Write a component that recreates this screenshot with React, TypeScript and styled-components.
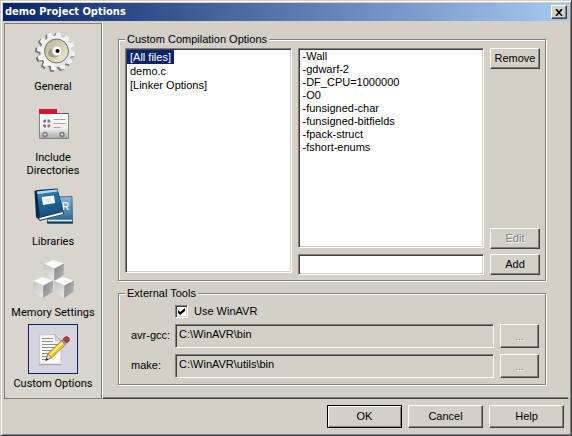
import React, { useState } from "react";
import styled, { createGlobalStyle, css } from "styled-components";

const face = "#d4d0c8";
const shade = "#808080";
const dark = "#404040";
const navy = "#0a246a";

const GlobalStyle = createGlobalStyle`
  * { box-sizing: border-box; }
  body { margin: 0; background: ${face}; }
  button, input { font: inherit; color: inherit; }
`;

const sunken = css`
  border: 1px solid;
  border-color: ${shade} #fff #fff ${shade};
  box-shadow: inset 1px 1px 0 ${dark}, inset -1px -1px 0 ${face};
`;

const raised = css`
  border: 1px solid;
  border-color: #fff ${dark} ${dark} #fff;
  box-shadow: inset -1px -1px 0 ${shade};
`;

const Dialog = styled.div`
  display: flex;
  flex-direction: column;
  min-height: 100vh;
  border: 1px solid;
  border-color: ${face} ${dark} ${dark} ${face};
  box-shadow: inset 1px 1px 0 #fff, inset -1px -1px 0 ${shade};
  padding: 2px;
  background: ${face};
  color: #000;
  font: 11px/13px "Liberation Sans", Arial, sans-serif;
`;

const TitleBar = styled.header`
  display: flex;
  align-items: center;
  justify-content: space-between;
  height: 18px;
  padding: 0 2px;
  background: linear-gradient(to right, ${navy}, #a6caf0);
`;

const Title = styled.h1`
  margin: 0;
  color: #fff;
  font: bold 11px/16px "DejaVu Sans Condensed", Tahoma, sans-serif;
`;

const CloseButton = styled.button`
  ${raised}
  display: grid;
  place-items: center;
  width: 16px;
  height: 14px;
  padding: 0;
  background: ${face};
`;

const Body = styled.div`
  display: flex;
  flex: 1;
  padding: 1px 0 0 1px;
`;

const Sidebar = styled.nav`
  display: flex;
  flex-direction: column;
  gap: 5px;
  width: 98px;
  margin-top: 1px;
  padding-top: 3px;
  border: 1px solid ${shade};
  background: #d8d4ce;
`;

const PageButton = styled.button`
  display: flex;
  flex-direction: column;
  align-items: center;
  gap: 3px;
  padding: 0;
  border: 0;
  background: none;
  text-align: center;
  font: 11px/13px Roboto, Tahoma, sans-serif;
`;

const IconFrame = styled.span<{ $selected: boolean }>`
  display: block;
  width: 50px;
  height: 50px;
  border: 1px solid ${(p) => (p.$selected ? navy : "transparent")};
  background: ${(p) => (p.$selected ? "#d4d5df" : "none")};

  svg {
    display: block;
    width: 48px;
    height: 48px;
  }
`;

const PageLabel = styled.span`
  white-space: pre-line;
`;

const Panel = styled.main`
  display: flex;
  flex: 1;
  flex-direction: column;
  gap: 6px;
  min-width: 0;
  padding: 10px 22px 13px 15px;
  border: 1px solid;
  border-color: ${face} ${face} ${dark} #fff;
  box-shadow: inset 0 -1px 0 ${shade};
`;

const Group = styled.fieldset<{ $grow?: boolean }>`
  display: flex;
  flex-direction: column;
  flex: ${(p) => (p.$grow ? "1" : "none")};
  min-width: 0;
  margin: 0;
  padding: 2px 5px 5px 6px;
  border: 1px solid ${shade};
  box-shadow: 1px 1px 0 #fff, inset 1px 1px 0 #fff;
`;

const Legend = styled.legend`
  padding: 0 2px;
  background: ${face};
`;

const Options = styled.div`
  display: grid;
  flex: 1;
  grid-template-columns: 167fr 187fr 50px;
  gap: 6px;
`;

const Column = styled.div<{ $gap: number }>`
  display: flex;
  flex-direction: column;
  gap: ${(p) => p.$gap}px;
  min-width: 0;
`;

const ListBox = styled.ul<{ $line: number }>`
  ${sunken}
  flex: 1;
  margin: 0;
  padding: 1px;
  background: #fff;
  line-height: ${(p) => p.$line}px;
  list-style: none;
`;

const FileList = styled(ListBox)`
  margin-bottom: 2px;
`;

const ListItem = styled.li<{ $selected?: boolean }>`
  width: fit-content;
  padding: 0 3px;
  background: ${(p) => (p.$selected ? navy : "transparent")};
  color: ${(p) => (p.$selected ? "#fff" : "#000")};
  cursor: default;
`;

const TextBox = styled.input`
  ${sunken}
  width: 100%;
  min-width: 0;
  height: 21px;
  padding: 0 3px;
  border-radius: 0;
  outline: none;
  background: #fff;

  &:read-only {
    height: 24px;
    padding-bottom: 4px;
    background: ${face};
  }
`;

const Button = styled.button`
  ${raised}
  height: 21px;
  padding: 0;
  background: ${face};

  &:disabled {
    color: ${shade};
    text-shadow: 1px 1px 0 #fff;
  }
`;

const Spacer = styled.div`
  flex: 1;
`;

const Tools = styled.div`
  display: grid;
  grid-template-columns: 38px 1fr 39px;
  align-items: center;
  gap: 6px;
  padding: 3px 1px 1px 6px;
`;

const ToolLabel = styled.label`
  padding-bottom: 2px;
  white-space: nowrap;
`;

const BrowseButton = styled(Button)`
  height: 24px;
`;

const CheckRow = styled.label`
  display: flex;
  grid-column: 2 / -1;
  align-items: center;
  gap: 6px;
  height: 13px;
`;

const CheckBox = styled.input`
  ${sunken}
  appearance: none;
  display: grid;
  place-items: center;
  width: 13px;
  height: 13px;
  margin: 0;
  background: #fff;

  &:checked::before {
    content: "";
    width: 7px;
    height: 7px;
    background: #000;
    clip-path: polygon(0 29%, 29% 57%, 100% 0, 100% 43%, 29% 100%, 0 71%);
  }
`;

const Footer = styled.footer`
  display: flex;
  justify-content: flex-end;
  gap: 6px;
  padding: 6px 5px 5px;
`;

const FooterButton = styled(Button)<{ $primary?: boolean }>`
  width: 75px;
  height: 23px;
  ${(p) =>
    p.$primary &&
    css`
      border-color: #000;
      box-shadow: inset 1px 1px 0 #fff, inset -1px -1px 0 ${shade};
    `}
`;

const teeth = Array.from({ length: 12 }, (_, i) => (i * 360) / 12 + 8);

const GearIcon = () => (
  <svg viewBox="1 1 48 48" aria-hidden="true">
    <defs>
      <linearGradient id="gearRim" x1="0" y1="0" x2="1" y2="1">
        <stop offset="0" stopColor="#e2e2e2" />
        <stop offset="0.5" stopColor="#ffffff" />
        <stop offset="1" stopColor="#d4d4da" />
      </linearGradient>
      <linearGradient id="gearFace" x1="0" y1="0" x2="1" y2="1">
        <stop offset="0" stopColor="#bab69c" />
        <stop offset="0.5" stopColor="#d2cdb2" />
        <stop offset="1" stopColor="#f4f0dc" />
      </linearGradient>
    </defs>
    <g fill="#77777b">
      {teeth.map((a) => (
        <path key={a} d="M23 11l1.500-5h4l1.500 5z" transform={`rotate(${a} 26.500 25.500)`} />
      ))}
      <circle cx="26.500" cy="25.500" r="15.500" />
    </g>
    <g fill="#f4f4f6">
      {teeth.map((a) => (
        <path key={a} d="M24.500 11l1.500-5.500h4l1.500 5.500z" transform={`rotate(${a} 28 24.500)`} />
      ))}
      <circle cx="28" cy="24.500" r="15.500" fill="url(#gearRim)" />
    </g>
    <circle cx="28.500" cy="24" r="12" fill="url(#gearFace)" stroke="#77745f" />
    <ellipse cx="26" cy="26" rx="6" ry="4.500" fill="#a39f86" />
    <circle cx="29" cy="24" r="4.800" fill="#fff" stroke="#c5c5bd" strokeWidth="0.600" />
    <circle cx="29.500" cy="24" r="2" fill="#050510" />
  </svg>
);

const IncludeIcon = () => (
  <svg viewBox="1 1 48 48" aria-hidden="true">
    <defs>
      <linearGradient id="card" x1="0" y1="0" x2="0" y2="1">
        <stop offset="0" stopColor="#ffffff" />
        <stop offset="0.600" stopColor="#efefef" />
        <stop offset="1" stopColor="#a8a8a8" />
      </linearGradient>
    </defs>
    <path d="M11.500 15.500h29v25h-29z" fill="url(#card)" stroke="#858589" />
    <path d="M11 11h18v5h-18z" fill="#d51430" />
    <path d="M29 15.500h11.500" stroke="#55555a" />
    <path
      d="M15 24.500v-1.500l1.500-1.500h1.500v3zM19.500 24.500v-3h1.500l1.500 1.500v1.500zM15 26.500h3v3h-1.500l-1.500-1.500zM19.500 26.500h3v1.500l-1.500 1.500h-1.500z"
      fill="#77777b"
    />
    <path d="M25.500 21.500h12M25.500 25.500h12" stroke="#a5a5aa" />
    <path d="M25.500 29.500h7" stroke="#a5a5aa" />
    <g fill="#dedede" stroke="#77777a" strokeWidth="1.300">
      <circle cx="17" cy="36.500" r="2" />
      <circle cx="34" cy="36.500" r="2" />
    </g>
    <path d="M17 37v3M34 37v3" stroke="#88888c" />
  </svg>
);

const LibrariesIcon = () => (
  <svg viewBox="1 1 48 48" aria-hidden="true">
    <defs>
      <linearGradient id="cover" x1="0" y1="0" x2="0.300" y2="1">
        <stop offset="0" stopColor="#4f95c0" />
        <stop offset="0.400" stopColor="#246c9d" />
        <stop offset="1" stopColor="#17517e" />
      </linearGradient>
      <linearGradient id="back" x1="0" y1="0" x2="0" y2="1">
        <stop offset="0" stopColor="#8bb9d4" />
        <stop offset="1" stopColor="#1c608f" />
      </linearGradient>
    </defs>
    <path d="M28 15l16-.5.5 26.500h-25v-3z" fill="url(#back)" stroke="#174b70" strokeWidth="0.700" />
    <path d="M20 38.500h24" stroke="#e8f0f5" strokeWidth="1.500" />
    <path d="M19 41h26" stroke="#092a45" />
    <text x="34" y="28" fill="#e8f1f6" fontFamily="Liberation Sans, sans-serif" fontSize="10" fontWeight="bold">R</text>
    <path d="M6.500 9l3-1 20-1.500 6.500 25.500-24 7-4-4z" fill="#082942" />
    <path d="M9 9.500l20-2 6.500 22-23.500 5.500z" fill="url(#cover)" />
    <path d="M11.500 37l23.500-6" stroke="#edf5f9" strokeWidth="2" />
    <path d="M9 9.500l20-2 .7 2-20 2.500z" fill="#b5d9ec" />
    <path d="M13.500 15l12.500-1.500 1.200 7.500-12.200 2z" fill="#f3f7fa" />
    <path d="M17.500 17.500l5-.8M17.500 19.500l6-.8" stroke="#c0ced8" strokeWidth="0.700" />
  </svg>
);

const Cube = ({ x, y }: { x: number; y: number }) => (
  <g transform={`translate(${x} ${y})`}>
    <path d="M0 4l9-4 11 3.500-9.500 5z" fill="#fafafa" />
    <path d="M0 4l10.500 4.500-.5 12.500-9-5z" fill="url(#cubeLeft)" />
    <path d="M10.500 8.500l9.500-5-.5 11.500-9.500 6z" fill="url(#cubeRight)" />
  </g>
);

const MemoryIcon = () => (
  <svg viewBox="1 1 48 48" aria-hidden="true">
    <defs>
      <linearGradient id="cubeLeft" x1="0" y1="0" x2="0.400" y2="1">
        <stop offset="0" stopColor="#c2c2c2" />
        <stop offset="1" stopColor="#e2e2e2" />
      </linearGradient>
      <linearGradient id="cubeRight" x1="0" y1="0" x2="1" y2="0.700">
        <stop offset="0" stopColor="#868686" />
        <stop offset="1" stopColor="#b2b2b2" />
      </linearGradient>
    </defs>
    <Cube x={16} y={7} />
    <Cube x={5} y={24} />
    <Cube x={26} y={24} />
  </svg>
);

const CustomIcon = () => (
  <svg viewBox="1 1 48 48" aria-hidden="true">
    <path d="M11.500 11l15-.5 6.500 6v24l-21.500.5z" fill="#f8f8fb" stroke="#bbbcc6" strokeWidth="0.700" />
    <path d="M26.500 10.500l1 6 5.500.5z" fill="#d4d6df" stroke="#a5a7b2" strokeWidth="0.600" />
    <path d="M14 14.500h11M14 17.500h11M14 20.500h16M14 23.500h13M14 26.500h12M14 29.500h9M14 32.500h6M14 35.500h4" stroke="#8f9097" />
    <path d="M11 40.500h22" stroke="#a9aab2" strokeWidth="1.500" />
    <path d="M18 36l2-6.500 14-13.500 4 4-14.500 14z" fill="#f1c42c" stroke="#96731a" strokeWidth="0.700" />
    <path d="M21.500 30l13-12.500 1.300 1.200-13 12.700z" fill="#fff084" />
    <path d="M18 36l2-6.500 3.500 4.500z" fill="#ead5ae" stroke="#7c6236" strokeWidth="0.600" />
    <path d="M17.500 37l.8-3 2 1.800z" fill="#151515" />
    <path d="M33 17l2.500-2.500 4 4-2.500 2.500z" fill="#8c8c98" />
    <path d="M35 15l2-2q2.500-1.500 4 1t-1 4l-1 1z" fill="#b63a36" stroke="#793028" strokeWidth="0.600" />
  </svg>
);

const pages = [
  { label: "General", icon: <GearIcon /> },
  { label: "Include\nDirectories", icon: <IncludeIcon /> },
  { label: "Libraries", icon: <LibrariesIcon /> },
  { label: "Memory Settings", icon: <MemoryIcon /> },
  { label: "Custom Options", icon: <CustomIcon /> },
];

const files = ["[All files]", "demo.c", "[Linker Options]"];

const flags = [
  "-Wall",
  "-gdwarf-2",
  "-DF_CPU=1000000",
  "-O0",
  "-funsigned-char",
  "-funsigned-bitfields",
  "-fpack-struct",
  "-fshort-enums",
];

export default function App() {
  const [page, setPage] = useState(4);
  const [file, setFile] = useState(0);
  const [flag, setFlag] = useState(-1);
  const [useWinAvr, setUseWinAvr] = useState(true);

  return (
    <>
      <GlobalStyle />
      <Dialog role="dialog" aria-labelledby="title">
        <TitleBar>
          <Title id="title">demo Project Options</Title>
          <CloseButton type="button" aria-label="Close">
            <svg width="8" height="7" viewBox="0 0 8 7" aria-hidden="true">
              <path d="M1 0l6 7M7 0l-6 7" stroke="#000" strokeWidth="1.600" />
            </svg>
          </CloseButton>
        </TitleBar>
        <Body>
          <Sidebar aria-label="Option pages">
            {pages.map((p, i) => (
              <PageButton
                key={p.label}
                type="button"
                aria-current={i === page ? "page" : undefined}
                onClick={() => setPage(i)}
              >
                <IconFrame $selected={i === page}>{p.icon}</IconFrame>
                <PageLabel>{p.label}</PageLabel>
              </PageButton>
            ))}
          </Sidebar>
          <Panel>
            <Group $grow>
              <Legend>Custom Compilation Options</Legend>
              <Options>
                <FileList $line={14} role="listbox" aria-label="Files" tabIndex={0}>
                  {files.map((name, i) => (
                    <ListItem
                      key={name}
                      role="option"
                      aria-selected={i === file}
                      $selected={i === file}
                      onClick={() => setFile(i)}
                    >
                      {name}
                    </ListItem>
                  ))}
                </FileList>
                <Column $gap={6}>
                  <ListBox $line={13} role="listbox" aria-label="Compiler flags" tabIndex={0}>
                    {flags.map((name, i) => (
                      <ListItem
                        key={name}
                        role="option"
                        aria-selected={i === flag}
                        $selected={i === flag}
                        onClick={() => setFlag(i)}
                      >
                        {name}
                      </ListItem>
                    ))}
                  </ListBox>
                  <TextBox type="text" aria-label="New flag" />
                </Column>
                <Column $gap={5}>
                  <Button type="button">Remove</Button>
                  <Spacer />
                  <Button type="button" disabled={flag < 0}>
                    Edit
                  </Button>
                  <Button type="button">Add</Button>
                </Column>
              </Options>
            </Group>
            <Group>
              <Legend>External Tools</Legend>
              <Tools>
                <CheckRow>
                  <CheckBox
                    type="checkbox"
                    checked={useWinAvr}
                    onChange={(e) => setUseWinAvr(e.target.checked)}
                  />
                  Use WinAVR
                </CheckRow>
                <ToolLabel htmlFor="gcc">avr-gcc:</ToolLabel>
                <TextBox id="gcc" type="text" readOnly value={"C:\\WinAVR\\bin"} />
                <BrowseButton type="button" disabled={useWinAvr} aria-label="Browse for avr-gcc">
                  ...
                </BrowseButton>
                <ToolLabel htmlFor="make">make:</ToolLabel>
                <TextBox id="make" type="text" readOnly value={"C:\\WinAVR\\utils\\bin"} />
                <BrowseButton type="button" disabled={useWinAvr} aria-label="Browse for make">
                  ...
                </BrowseButton>
              </Tools>
            </Group>
          </Panel>
        </Body>
        <Footer>
          <FooterButton type="button" $primary>
            OK
          </FooterButton>
          <FooterButton type="button">Cancel</FooterButton>
          <FooterButton type="button">Help</FooterButton>
        </Footer>
      </Dialog>
    </>
  );
}
